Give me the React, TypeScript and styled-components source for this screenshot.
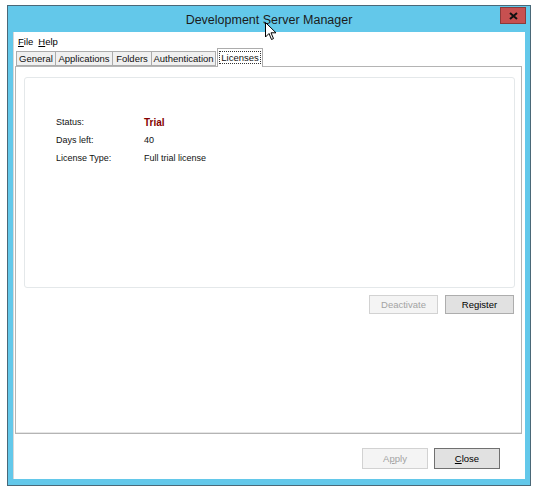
import React from "react";
import styled, { createGlobalStyle } from "styled-components";

const GlobalStyle = createGlobalStyle`
  html, body {
    margin: 0;
    padding: 0;
    background: #ffffff;
  }
  body {
    font-family: "Liberation Sans", Arial, sans-serif;
    font-size: 9px;
    color: #000;
  }
`;

const tabs = [
  { name: "General", width: 40 },
  { name: "Applications", width: 58 },
  { name: "Folders", width: 40 },
  { name: "Authentication", width: 65 },
  { name: "Licenses", width: 46 },
];

const rows = [
  { label: "Status:", value: "Trial", strong: true },
  { label: "Days left:", value: "40" },
  { label: "License Type:", value: "Full trial license" },
];

const App = () => {
  return (
    <>
      <GlobalStyle />
      <Desktop>
        <Window>
          <TitleBar>
            <Title>Development Server Manager</Title>
            <CloseBox>
              <svg width="9" height="8" viewBox="0 0 9 8">
                <path d="M1 1 L8 7 M8 1 L1 7" stroke="#111" strokeWidth="2" />
              </svg>
            </CloseBox>
            <Cursor width="12" height="19" viewBox="0 0 12 19">
              <path
                d="M0.5 0.5 L0.5 15 L4 11.5 L6.5 17.5 L8.5 16.6 L6 10.8 L11 10.8 Z"
                fill="#fff"
                stroke="#000"
                strokeWidth="1"
              />
            </Cursor>
          </TitleBar>
          <Client>
            <MenuBar>
              <MenuItem>
                <u>F</u>ile
              </MenuItem>
              <MenuItem>
                <u>H</u>elp
              </MenuItem>
            </MenuBar>
            <TabStrip>
              {tabs.map((t, i) => (
                <Tab
                  key={t.name}
                  $w={t.width}
                  $active={t.name === "Licenses"}
                  $first={i === 0}
                >
                  {t.name === "Licenses" ? <Focus>{t.name}</Focus> : t.name}
                </Tab>
              ))}
            </TabStrip>
            <TabPage>
              <GroupBox>
                <InfoGrid>
                  {rows.map((r) => (
                    <React.Fragment key={r.label}>
                      <Label>{r.label}</Label>
                      <Value $strong={r.strong}>{r.value}</Value>
                    </React.Fragment>
                  ))}
                </InfoGrid>
              </GroupBox>
              <ActionRow>
                <SmallButton disabled>Deactivate</SmallButton>
                <SmallButton>Register</SmallButton>
              </ActionRow>
            </TabPage>
            <Footer>
              <DialogButton disabled>
                A<u>p</u>ply
              </DialogButton>
              <DialogButton $default>
                <u>C</u>lose
              </DialogButton>
            </Footer>
          </Client>
        </Window>
      </Desktop>
    </>
  );
};

export default App;

const Desktop = styled.div`
  width: 538px;
  height: 494px;
  padding: 5px 0 0 7px;
  box-sizing: border-box;
`;

const Window = styled.div`
  width: 524px;
  height: 481px;
  box-sizing: border-box;
  border: 1px solid #4a6878;
  background: #63c8ea;
  padding: 0 5px 6px 5px;
  display: flex;
  flex-direction: column;
`;

const TitleBar = styled.div`
  position: relative;
  height: 26px;
  display: flex;
  align-items: center;
  justify-content: center;
`;

const Title = styled.div`
  font-family: "Liberation Sans", Arial, sans-serif;
  font-size: 12.5px;
  color: #1b1b1b;
  margin-top: 1px;
`;

const CloseBox = styled.div`
  position: absolute;
  right: -1px;
  top: 1px;
  width: 26px;
  height: 17px;
  box-sizing: border-box;
  background: #c75050;
  border: 1px solid #8c3a3a;
  display: flex;
  align-items: center;
  justify-content: center;
`;

const Cursor = styled.svg`
  position: absolute;
  left: 252px;
  top: 16px;
`;

const Client = styled.div`
  flex: 1;
  background: #ffffff;
  border-left: 1px solid #d8d8d8;
  display: flex;
  flex-direction: column;
`;

const MenuBar = styled.div`
  display: flex;
  gap: 5px;
  padding: 4px 0 0 4px;
  height: 15px;
`;

const MenuItem = styled.span`
  font-size: 9.5px;
  line-height: 12px;
`;

const TabStrip = styled.div`
  display: flex;
  align-items: flex-end;
  padding-left: 2px;
  height: 16px;
  position: relative;
  z-index: 1;
  margin-bottom: -1px;
`;

const Tab = styled.div<{ $active?: boolean; $first?: boolean; $w: number }>`
  box-sizing: border-box;
  width: ${(p) => p.$w}px;
  height: ${(p) => (p.$active ? "19px" : "15px")};
  padding-top: ${(p) => (p.$active ? "2px" : "1px")};
  margin-bottom: ${(p) => (p.$active ? "0" : "1px")};
  margin-left: ${(p) => (p.$first ? "0" : p.$active ? "1px" : "-1px")};
  background: ${(p) => (p.$active ? "#ffffff" : "#f0f0f0")};
  border: 1px solid #acacac;
  border-bottom: ${(p) => (p.$active ? "none" : "1px solid #acacac")};
  font-size: 9.5px;
  line-height: 12px;
  text-align: center;
  white-space: nowrap;
  color: #111;
`;

const Focus = styled.span`
  display: inline-block;
  border: 1px dotted #333;
  padding: 0 1px;
  line-height: 11px;
`;

const TabPage = styled.div`
  margin: 0 3px 0 1px;
  height: 368px;
  box-sizing: border-box;
  border: 1px solid #b4b4b4;
  box-shadow: inset 0 -1px 0 #e6e6e6;
  background: #ffffff;
  padding: 10px 6px 0 8px;
  display: flex;
  flex-direction: column;
`;

const GroupBox = styled.div`
  height: 211px;
  box-sizing: border-box;
  border: 1px solid #e4e8ea;
  border-radius: 3px;
  padding: 35px 0 0 31px;
`;

const InfoGrid = styled.div`
  display: grid;
  grid-template-columns: 88px auto;
  grid-auto-rows: 18px;
  align-items: center;
`;

const Label = styled.div`
  font-size: 9px;
  color: #111;
`;

const Value = styled.div<{ $strong?: boolean }>`
  font-size: ${(p) => (p.$strong ? "10px" : "9px")};
  font-weight: ${(p) => (p.$strong ? "bold" : "normal")};
  color: ${(p) => (p.$strong ? "#850000" : "#111")};
`;

const ActionRow = styled.div`
  display: flex;
  justify-content: flex-end;
  gap: 7px;
  margin-top: 7px;
  padding-right: 1px;
`;

const SmallButton = styled.button`
  width: 69px;
  height: 19px;
  box-sizing: border-box;
  font-family: "Liberation Sans", Arial, sans-serif;
  font-size: 9.5px;
  padding: 0;
  background: #e1e1e1;
  border: 1px solid #adadad;
  color: #000;

  &:disabled {
    background: #f4f4f4;
    border-color: #d2d2d2;
    color: #a3a3a3;
  }
`;

const Footer = styled.div`
  display: flex;
  justify-content: flex-end;
  gap: 6px;
  padding: 14px 25px 0 0;
`;

const DialogButton = styled.button<{ $default?: boolean }>`
  width: 66px;
  height: 21px;
  box-sizing: border-box;
  font-family: "Liberation Sans", Arial, sans-serif;
  font-size: 9.5px;
  padding: 0;
  background: #e1e1e1;
  border: 1px solid ${(p) => (p.$default ? "#707070" : "#adadad")};
  color: #000;

  &:disabled {
    background: #f4f4f4;
    border-color: #d2d2d2;
    color: #a3a3a3;
  }
`;
